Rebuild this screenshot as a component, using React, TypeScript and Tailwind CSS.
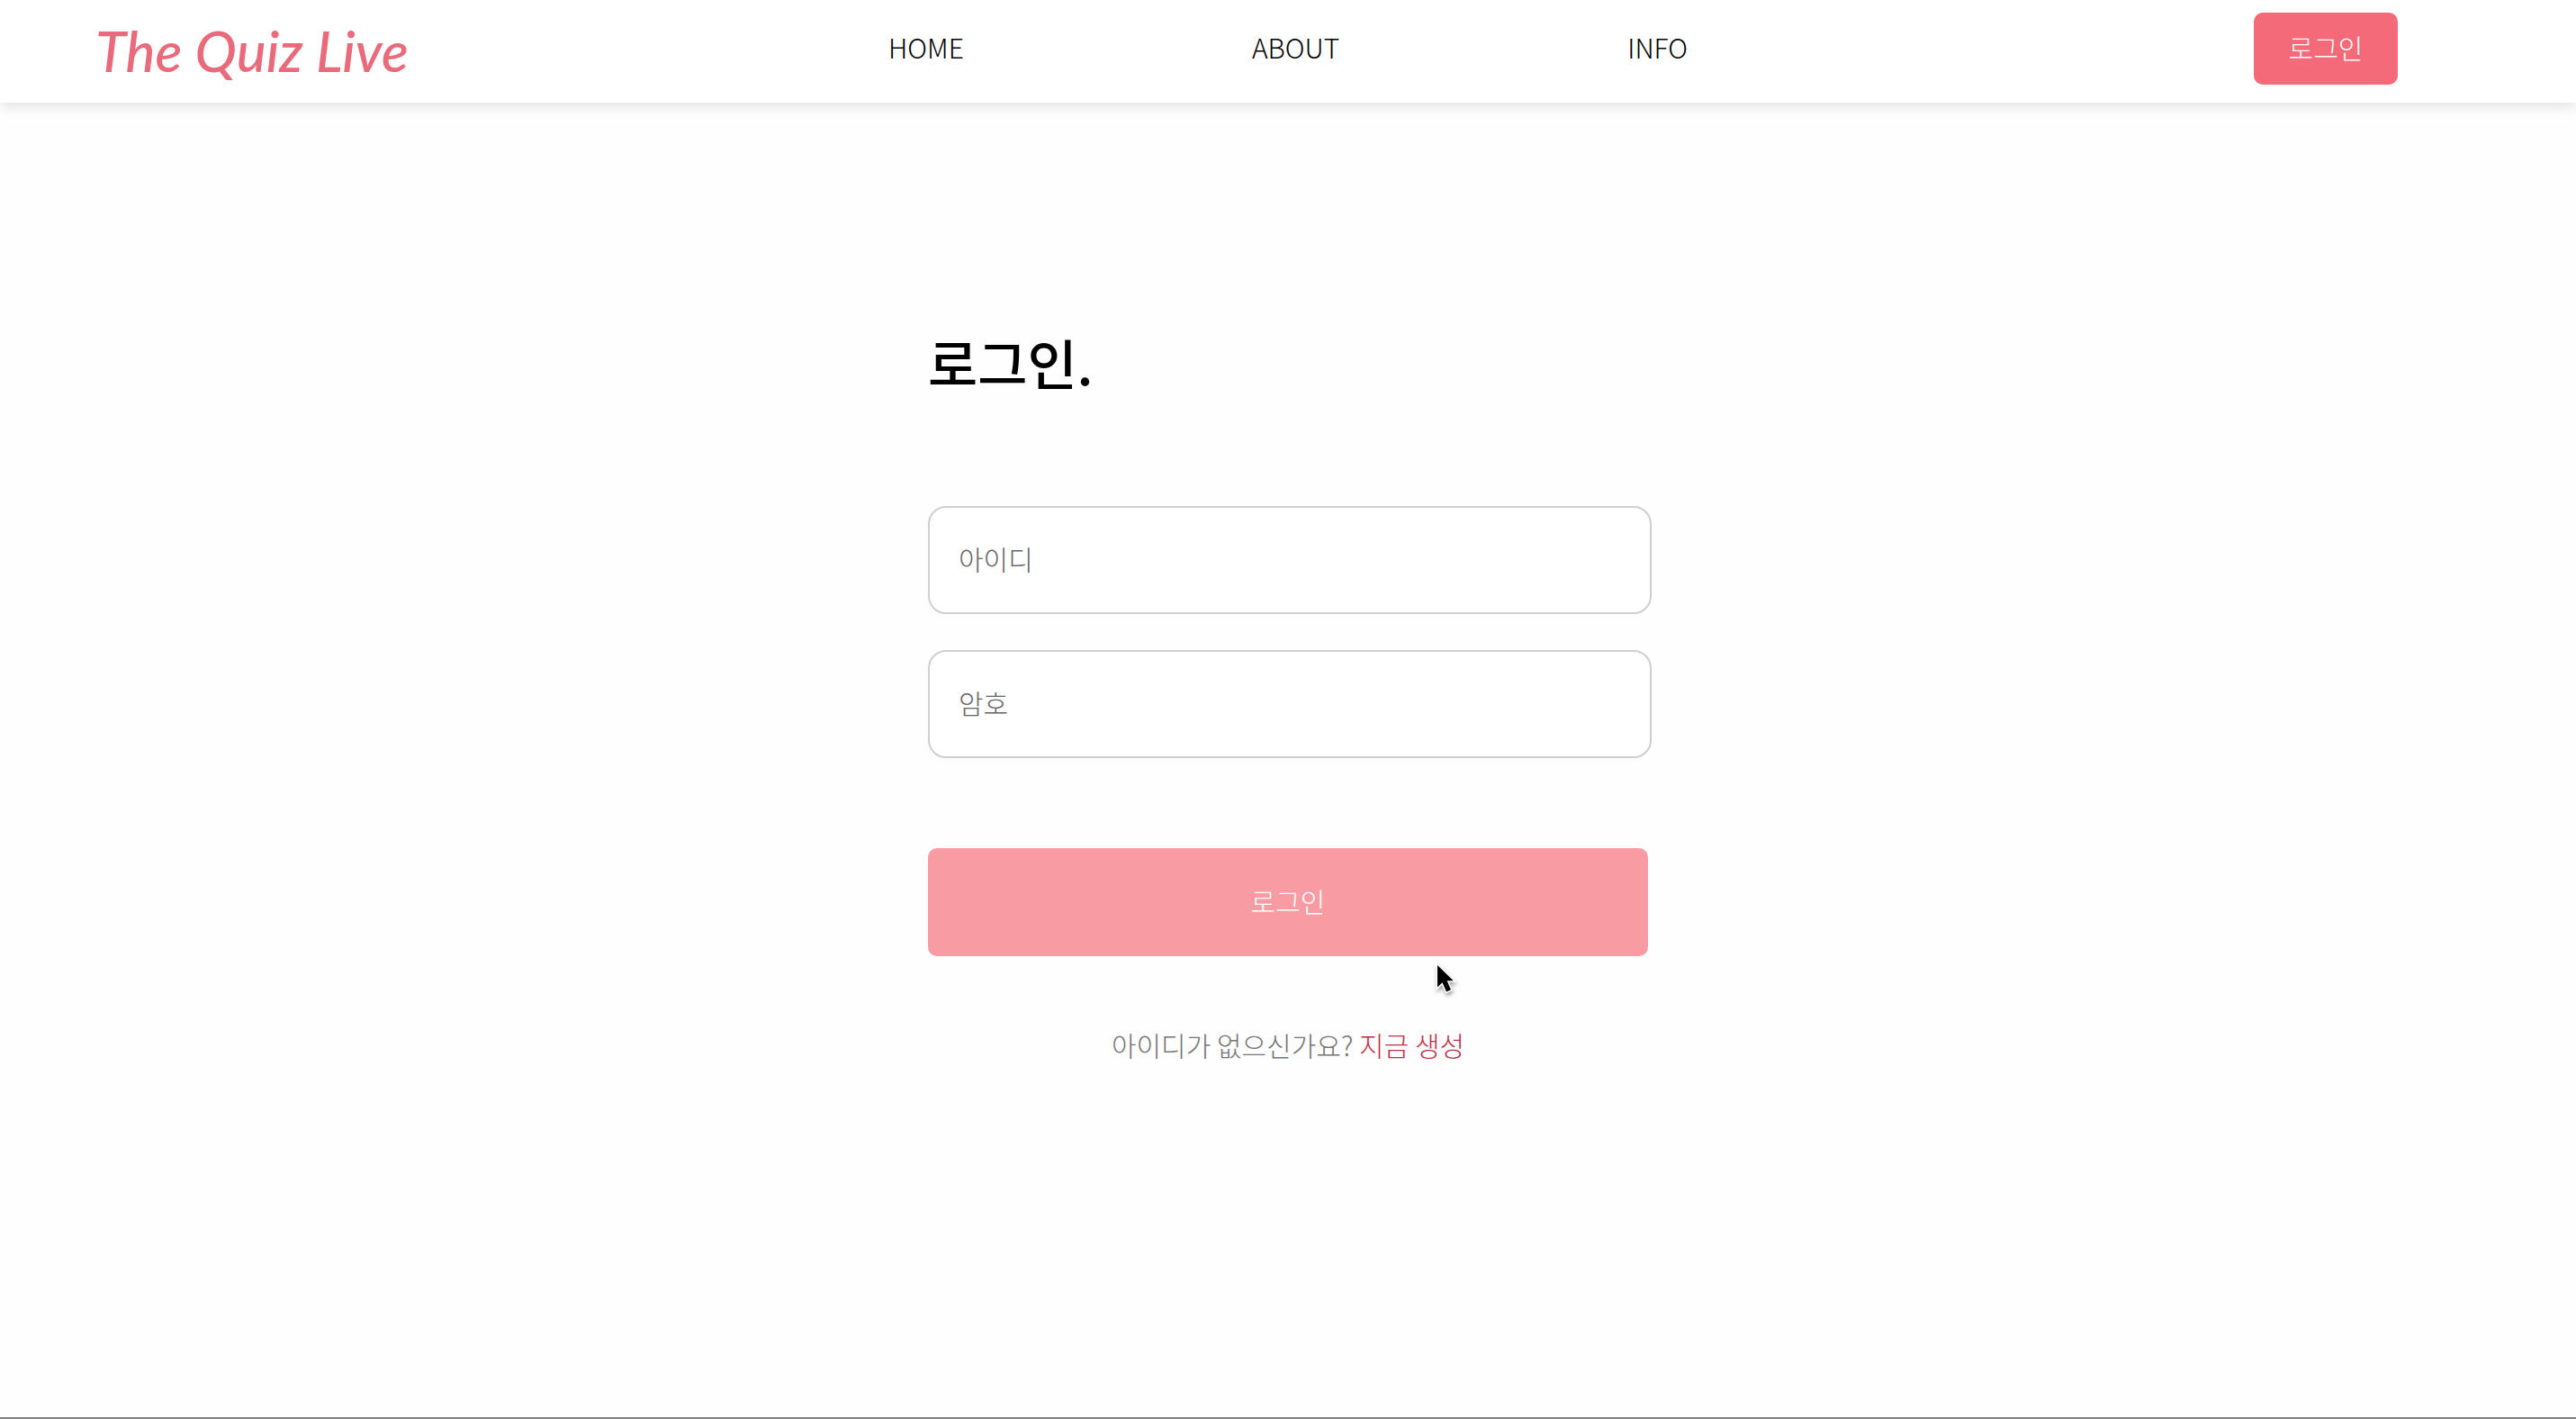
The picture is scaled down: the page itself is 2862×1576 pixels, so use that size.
const navItems = ["HOME", "ABOUT", "INFO"];

function Header() {
  return (
    <header className="relative grid h-[114px] grid-cols-[1fr_auto_1fr] items-start bg-white shadow-[0_4px_14px_rgba(0,0,0,0.12)]">
      <a
        href="#"
        className="ml-[106px] mt-4 justify-self-start whitespace-nowrap font-['Lato',sans-serif] text-[62px] leading-[80px] font-medium text-[#e96a7b] italic"
      >
        The Quiz Live
      </a>
      <nav className="mt-3.5 flex h-20 items-center gap-80 pb-1">
        {navItems.map((item) => (
          <a key={item} href="#" className="text-black">
            {item}
          </a>
        ))}
      </nav>
      <button
        type="button"
        className="mt-3.5 mr-[198px] h-20 w-40 justify-self-end rounded-[10px] bg-[#f56a78] pb-1 text-white"
      >
        로그인
      </button>
    </header>
  );
}

function Field({ id, label, type }: { id: string; label: string; type: string }) {
  return (
    <input
      id={id}
      type={type}
      aria-label={label}
      placeholder={label}
      className="h-[120px] w-full rounded-[20px] border-2 border-[#cfcfcf] bg-white px-8 pb-1 text-black outline-none placeholder:text-[#656565] placeholder:opacity-100"
    />
  );
}

function Pointer() {
  return (
    <svg
      aria-hidden="true"
      viewBox="0 0 28 40"
      className="pointer-events-none absolute top-[126px] left-[562px] h-10 w-7 drop-shadow-[1px_3px_2px_rgba(0,0,0,0.35)]"
    >
      <path
        d="M4 4 V28.500 L9.500 23.300 L14 33.500 L19 31.300 L14.700 21.300 H21.800 Z"
        fill="#000"
        stroke="#fff"
        strokeWidth="3"
        strokeLinejoin="miter"
        paintOrder="stroke"
      />
    </svg>
  );
}

export default function App() {
  return (
    <div className="flex min-h-screen flex-col border-b-2 border-[#807d7f] bg-[#fefefe] font-['Noto_Sans_CJK_KR',sans-serif] text-[30px] leading-[44px] font-light">
      <Header />
      <main className="mx-auto w-[800px] max-w-full pt-[244px]">
        <h1 className="text-[60px] leading-[88px] font-medium text-black">로그인.</h1>
        <form className="mt-[116px]" onSubmit={(e) => e.preventDefault()}>
          <div className="-mr-1 flex flex-col gap-10">
            <Field id="user-id" label="아이디" type="text" />
            <Field id="password" label="암호" type="password" />
          </div>
          <div className="relative mt-[100px]">
            <button type="submit" className="h-[120px] w-full rounded-[10px] bg-[#f99ba2] pb-1 text-white">
              로그인
            </button>
            <Pointer />
          </div>
        </form>
        <p className="mt-[76px] text-center text-[#757575]">
          아이디가 없으신가요?{" "}
          <a href="#" className="text-[#c02f49]">
            지금 생성
          </a>
        </p>
      </main>
    </div>
  );
}
